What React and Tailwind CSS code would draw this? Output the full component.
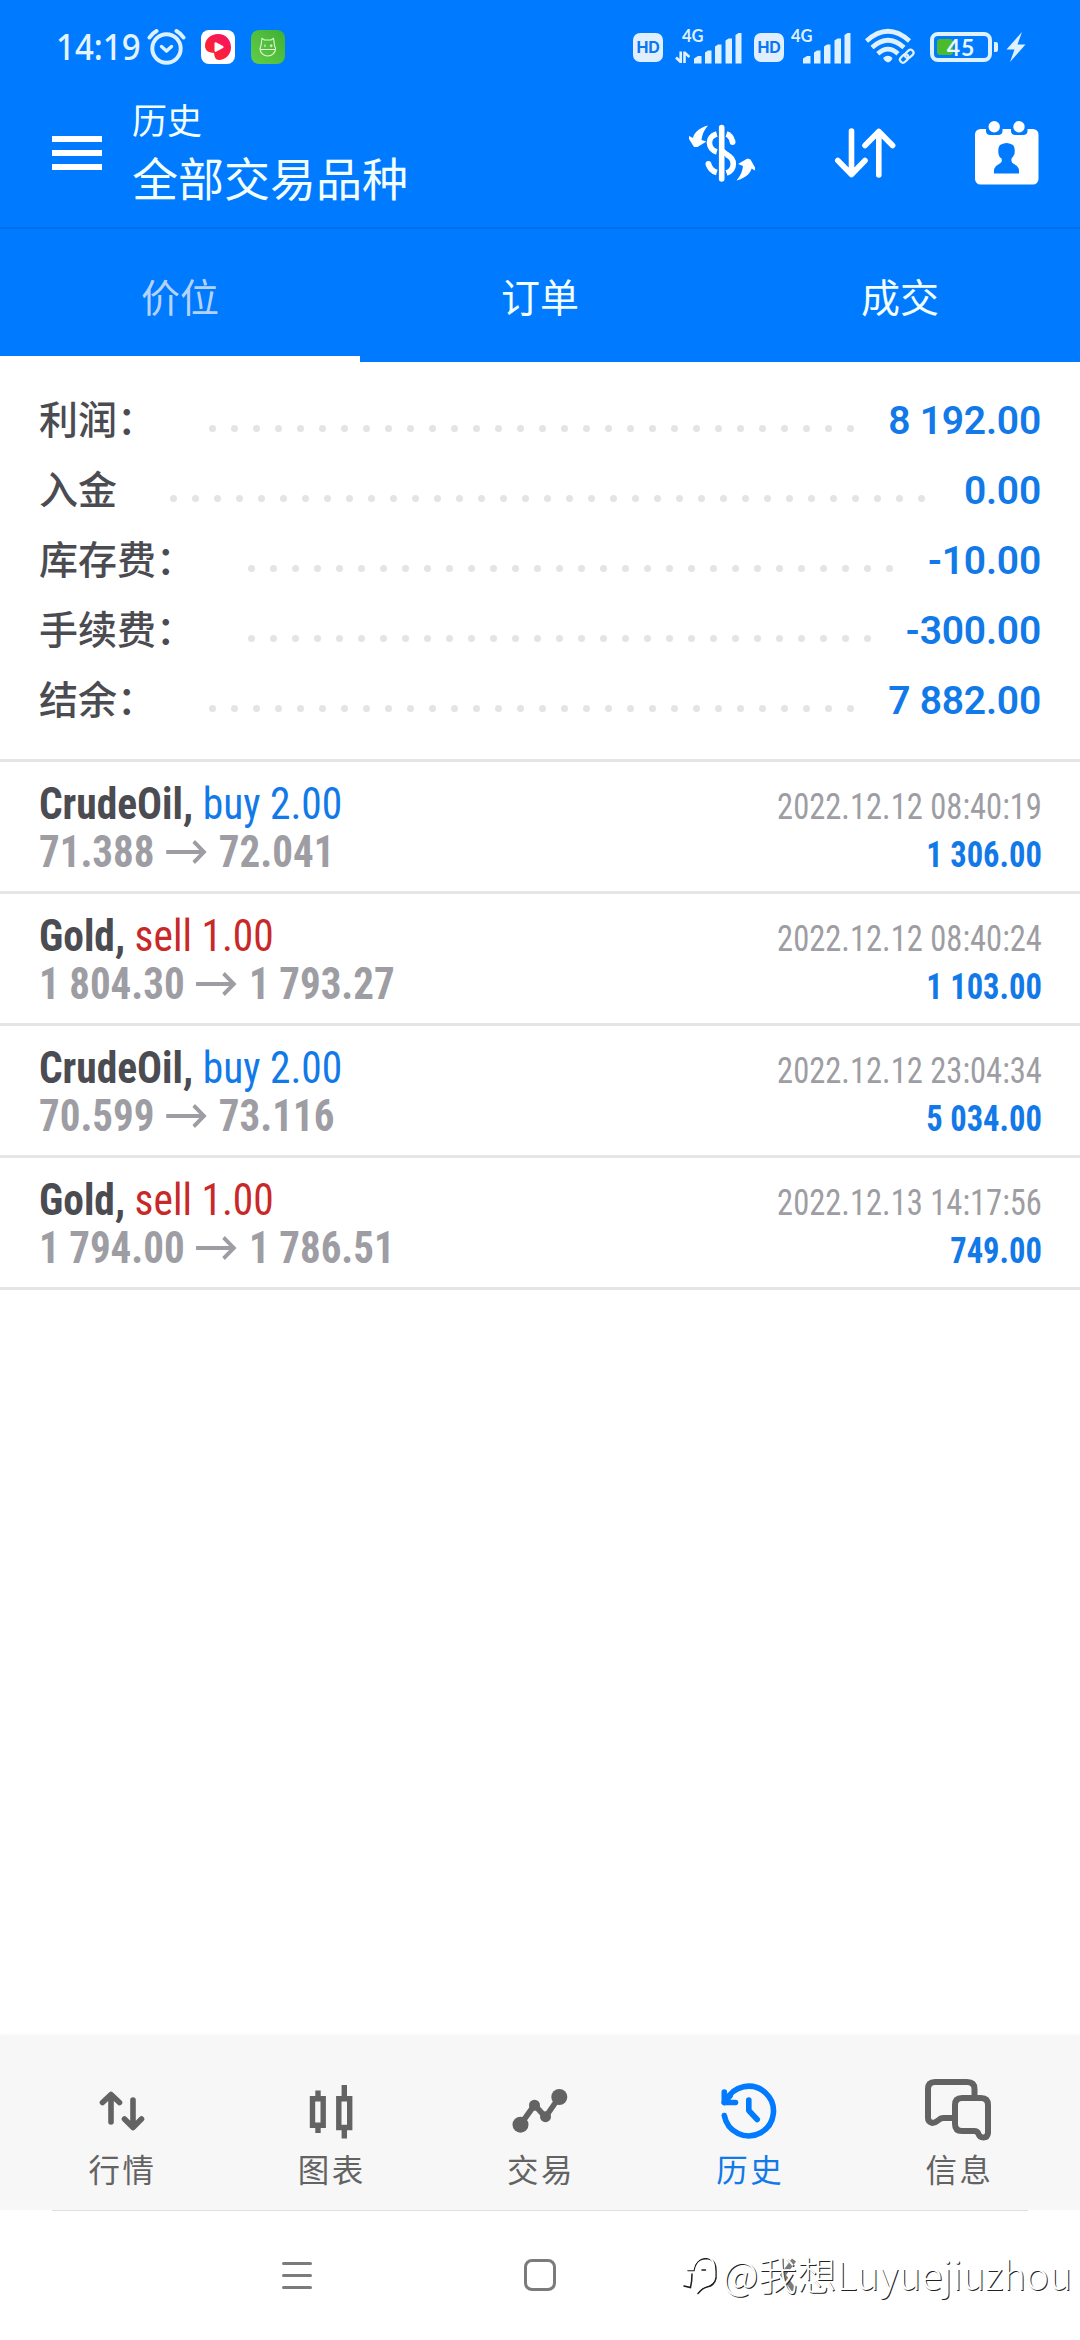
const summary = [
  { label: '利润：', value: '8 192.00', dots: 30 },
  { label: '入金', value: '0.00', dots: 35 },
  { label: '库存费：', value: '-10.00', dots: 30 },
  { label: '手续费：', value: '-300.00', dots: 29 },
  { label: '结余：', value: '7 882.00', dots: 30 },
];

const trades = [
  { symbol: 'CrudeOil', side: 'buy', volume: '2.00', open: '71.388', close: '72.041', time: '2022.12.12 08:40:19', profit: '1 306.00' },
  { symbol: 'Gold', side: 'sell', volume: '1.00', open: '1 804.30', close: '1 793.27', time: '2022.12.12 08:40:24', profit: '1 103.00' },
  { symbol: 'CrudeOil', side: 'buy', volume: '2.00', open: '70.599', close: '73.116', time: '2022.12.12 23:04:34', profit: '5 034.00' },
  { symbol: 'Gold', side: 'sell', volume: '1.00', open: '1 794.00', close: '1 786.51', time: '2022.12.13 14:17:56', profit: '749.00' },
];

const tabs = [
  { label: '价位', active: true },
  { label: '订单', active: false },
  { label: '成交', active: false },
];

function AlarmIcon() {
  return (
    <svg className="ml-[8px] h-[38px] w-[40px]" viewBox="146 28 40 38" fill="none" stroke="#dcf1ff" strokeLinecap="round">
      <circle cx="166.5" cy="48.5" r="14.2" strokeWidth="4" />
      <path d="M149.5 37.5Q152 33.500 156.500 31M183.500 37.500Q181 33.500 176.500 31" strokeWidth="4" />
      <path d="M161.500 46.500L166.500 51L171.500 46.500" strokeWidth="3.400" strokeLinejoin="round" />
    </svg>
  );
}

function VideoAppIcon() {
  return (
    <svg className="ml-[15px] h-[34px] w-[34px]" viewBox="0 0 34 34">
      <defs>
        <linearGradient id="redBlob" x1="0" y1="1" x2="1" y2="0">
          <stop offset="0" stopColor="#ff2a1c" />
          <stop offset="1" stopColor="#f5116b" />
        </linearGradient>
      </defs>
      <rect width="34" height="34" rx="8" fill="#fff" />
      <path d="M17 4C25 4 30 10 30 17.500C30 25 24 30 18 30C14.500 30 13.500 27 13 23C9 22.500 4 21.500 4 16C4 9 9.500 4 17 4Z" fill="url(#redBlob)" />
      <path d="M13.500 13.500Q13.500 11.800 15 12.300L22 16Q23.500 17 22 18L15 21.800Q13.500 22.300 13.500 20.500Z" fill="#fff" />
    </svg>
  );
}

function GreenAppIcon() {
  return (
    <svg className="ml-[16px] h-[34px] w-[34px]" viewBox="0 0 34 34">
      <defs>
        <linearGradient id="greenTile" x1="0" y1="1" x2="1" y2="0">
          <stop offset="0" stopColor="#62cd48" />
          <stop offset="1" stopColor="#3fb035" />
        </linearGradient>
      </defs>
      <rect width="34" height="34" rx="8" fill="url(#greenTile)" />
      <g fill="none" stroke="#e4f9cf" strokeWidth="1.100">
        <path d="M10.500 11.500L11 8.500L13.500 10H20L22.500 8.500L23 11.500Q23 15 24.500 18.500C24.500 23 21 26 16.800 26C12.500 26 9 23 9 18.500Q10.500 15 10.500 11.500ZM9 19.500H24.500" />
        <path d="M14 14.500V17M18.700 15.700H21.700M20.200 14.200V17.200" />
      </g>
    </svg>
  );
}

function HdBadge({ className }) {
  return (
    <span className={`flex h-[29px] w-[30px] items-center justify-center rounded-[7px] bg-[#dfefff] font-['Inter',sans-serif] text-[16px] leading-none font-bold tracking-[-0.3px] text-[#0a76f0] ${className}`}>
      HD
    </span>
  );
}

function CellSignal({ transfer, className }) {
  return (
    <span className={`flex h-[34px] items-start ${className}`}>
      <span className="flex h-full w-[27px] flex-col items-end">
        <span className="w-[20px] font-['Lato',sans-serif] text-[16.5px] leading-[13px] font-bold text-[#dff1ff]">4G</span>
        {transfer && (
          <svg className="mt-[8px] mr-[12px] h-[12px] w-[15px]" viewBox="0 0 15 12" fill="none" stroke="#dff1ff" strokeWidth="2.600">
            <path d="M5.700 0.500V12M5.700 11L1 6.500M9.500 12V0.500M9.500 1.500L14.500 6" />
          </svg>
        )}
      </span>
      <svg className="-ml-[9px] h-[34px] w-[49px]" viewBox="0 0 49 34" fill="#dff1ff">
        <path d="M1 33.500V28.500L5 26H8.500V33.500ZM12 33.500V22.500L15 20.500H18.500V33.500ZM22 33.500V16.500L25 14.500H28.500V33.500ZM32.500 33.500V10.500L35.500 8.500H39V33.500ZM42.500 33.500V5L45.500 3H48.500V33.500Z" />
      </svg>
    </span>
  );
}

function WifiIcon() {
  return (
    <svg className="ml-[13px] h-[38px] w-[52px]" viewBox="864 29 52 38" fill="none" stroke="#dff1ff">
      <path d="M866.500 42Q888 22.500 909.500 42" strokeWidth="4.600" />
      <path d="M872 48.500Q888 34 904 48.500" strokeWidth="4.600" />
      <path d="M877.800 54.800Q888 45.500 898 54.800" strokeWidth="4.600" />
      <path d="M883 59Q888 54.500 892.500 59Q891.500 62.500 888 63.500Q884.500 62.500 883 59Z" fill="#dff1ff" stroke="none" />
      <g strokeWidth="2.200" strokeLinecap="round">
        <rect x="899.500" y="56.500" width="9.500" height="6" rx="3" transform="rotate(-45 904.200 59.500)" />
        <rect x="904.500" y="52" width="9.500" height="6" rx="3" transform="rotate(-45 909.200 55)" />
      </g>
    </svg>
  );
}

function Battery() {
  return (
    <span className="ml-[14px] flex items-center">
      <span className="relative flex h-[30px] w-[62px] items-center justify-center rounded-[8px] border-[4px] border-[#dff1ff]">
        <span className="absolute top-[3px] left-[3px] h-[16px] w-[16px] rounded-[3px] bg-[#4cbb2b]" />
        <span className="relative font-['Lato',sans-serif] text-[23px] leading-none font-bold tracking-[1px] text-[#e9f7ff]">45</span>
      </span>
      <span className="ml-[2px] h-[10px] w-[4px] rounded-r-[2px] bg-[#dff1ff]" />
      <svg className="ml-[8px] h-[30px] w-[20px]" viewBox="0 0 20 30" fill="#dff1ff">
        <path d="M16 0L0.500 17.500H8.500L4 30L19.500 12.500H11.500Z" />
      </svg>
    </span>
  );
}

function StatusBar() {
  return (
    <div className="flex h-[94px] items-center pl-[56px]">
      <span className="w-[82px] origin-left scale-x-[0.93] font-['Noto_Sans',sans-serif] text-[35.500px] leading-none font-medium whitespace-nowrap text-[#e4f4ff]">14:19</span>
      <AlarmIcon />
      <VideoAppIcon />
      <GreenAppIcon />
      <HdBadge className="ml-[348px]" />
      <CellSignal transfer className="ml-[12px]" />
      <HdBadge className="ml-[12px]" />
      <CellSignal className="ml-0" />
      <WifiIcon />
      <Battery />
    </div>
  );
}

function DollarSwapIcon() {
  return (
    <svg className="h-[60px] w-[70px]" viewBox="687 123 70 60" fill="none">
      <path d="M721.700 127.500V179" stroke="#fff" strokeWidth="5.600" strokeLinecap="round" />
      <path d="M716.800 134C706 137 708 149.500 716.800 152M726.500 134Q731 135.500 732.500 141.500M726.500 154.500C736 159 735 170 726.500 173M716.800 172.500Q710 170.500 708.500 164" stroke="#fff" strokeWidth="5.600" />
      <circle cx="732.600" cy="142" r="2.900" fill="#fff" />
      <circle cx="708.400" cy="164" r="2.900" fill="#fff" />
      <path d="M722 150.500L727.500 155" stroke="#fff" strokeWidth="5" />
      <path d="M708 125.500C698 128 693.500 134 693 138L689 136V139L694 147H697.500L706.500 141.500L701.500 140C702 135 704 130 708 125.500Z" fill="#fff" />
      <path d="M736.500 180.500C746.500 178 751 172 751.500 168.500L755 170.500V167.500L750.500 159.500L747.500 158.500L738 164L743 166C742.500 171 740.500 176 736.500 180.500Z" fill="#fff" />
    </svg>
  );
}

function SortIcon() {
  return (
    <svg className="ml-[77px] h-[54px] w-[64px]" viewBox="834 126 64 54" fill="none" stroke="#fff" strokeWidth="5.600" strokeLinecap="round" strokeLinejoin="round">
      <path d="M851.500 131V174M837.800 160.500L851.500 174.500L865 160.500M878.800 175V131.500M865 145.500L878.800 131.500L892.600 145.500" />
    </svg>
  );
}

function CalendarUserIcon() {
  return (
    <svg className="ml-[75px] h-[66px] w-[68px]" viewBox="973 119 68 66">
      <rect x="975" y="128" width="63.500" height="55.500" rx="5.500" fill="#fff" />
      <path d="M986 126H1002.500V130Q1002.500 134 998 134H990.500Q986 134 986 130ZM1011 126H1027.500V130Q1027.500 134 1023 134H1015.500Q1011 134 1011 130Z" fill="#007aff" />
      <circle cx="994.200" cy="125.700" r="5.700" fill="#fff" />
      <circle cx="1019" cy="125.700" r="5.700" fill="#fff" />
      <path d="M1001 143.500Q1006.500 140.500 1012 143.500Q1015.500 145 1014.500 153Q1013 156 1011.500 157.500Q1011 161 1012.500 162L1017 165Q1019.500 167.500 1019 172.500H994Q993.500 167.500 996 165L1000.500 162Q1002.500 161 1001.500 157.500Q999 156 998.500 153Q997.500 145 1001 143.500Z" fill="#007aff" />
    </svg>
  );
}

function TitleBar() {
  return (
    <div className="flex h-[135px] items-start border-b-2 border-[#0070ea] pl-[52px]">
      <span className="mt-[42px] flex w-[50px] flex-col gap-[8px]">
        <span className="h-[6px] bg-white" />
        <span className="h-[6px] bg-white" />
        <span className="h-[6px] bg-white" />
      </span>
      <div className="ml-[30px] w-[555px] text-[#f2ffff]">
        <div className="mt-[4px] text-[35px] leading-[50px]">历史</div>
        <div className="mt-px text-[46px] leading-[62px]">全部交易品种</div>
      </div>
      <div className="mt-[25px] flex h-[68px] items-center">
        <DollarSwapIcon />
        <SortIcon />
        <CalendarUserIcon />
      </div>
    </div>
  );
}

function Tabs() {
  return (
    <div className="grid h-[133px] grid-cols-3">
      {tabs.map((t) => (
        <div
          key={t.label}
          className={
            t.active
              ? 'h-[133px] border-b-[6px] border-white pt-[5px] text-center text-[39px] leading-[122px] text-[#b5d3fa]'
              : 'h-[133px] pt-[5px] text-center text-[39px] leading-[128px] text-[#f2ffff]'
          }
        >
          <span className={t.active ? 'relative top-[4px]' : 'relative top-px'}>{t.label}</span>
        </div>
      ))}
    </div>
  );
}

function SummaryRow({ label, value, dots }) {
  return (
    <div className="flex h-[70px] items-center">
      <span className="pt-[3px] text-[39px] leading-[67px] font-medium whitespace-nowrap text-[#4b4b52]">{label}</span>
      <span className="mt-[17px] ml-[53px] flex gap-[15px]">
        {Array.from({ length: dots }, (_, i) => (
          <span key={i} className="h-[7px] w-[7px] rounded-full bg-[#e4e4e4]" />
        ))}
      </span>
      <span className="ml-auto pt-[3px] text-[39px] leading-[67px] font-semibold tracking-[-0.200px] whitespace-nowrap text-[#1279e8]">{value}</span>
    </div>
  );
}

function PriceArrow() {
  return (
    <svg className="mx-[12px] h-[26px] w-[45px]" viewBox="0 0 45 26" fill="none" stroke="#9d9da3" strokeWidth="4">
      <path d="M0.500 13H41M30 2.500L41 13L30 23.500" />
    </svg>
  );
}

function TradeRow({ symbol, side, volume, open, close, time, profit }) {
  return (
    <div className="flex h-[132px] justify-between border-b-[3px] border-[#e5e5e5] pt-[18px] pr-[38px] pl-[39px] font-['Roboto_Condensed','Roboto',sans-serif]">
      <div className="text-[44px] leading-[48px]">
        <div className="origin-left scale-x-[0.942] whitespace-pre">
          <span className="font-bold text-[#4b4b52]">{symbol}, </span>
          <span className={side === 'buy' ? 'text-[#1279e8]' : 'text-[#c92828]'}>
            {side} {volume}
          </span>
        </div>
        <div className="flex origin-left scale-x-[0.932] items-center font-bold text-[#9d9da3]">
          <span>{open}</span>
          <PriceArrow />
          <span>{close}</span>
        </div>
      </div>
      <div className="origin-right scale-x-[0.892] pt-[3px] text-right text-[36.500px] leading-[48px]">
        <div className="text-[#9d9da3]">{time}</div>
        <div className="font-bold text-[#1279e8]">{profit}</div>
      </div>
    </div>
  );
}

function QuotesIcon() {
  return (
    <svg className="h-[60px] w-[60px]" viewBox="92 2080 60 60" fill="none" stroke="#636363" strokeWidth="5.600" strokeLinecap="round" strokeLinejoin="round">
      <path d="M111 2122V2095M102.500 2102.500L111 2094.500L119.500 2102.500M133 2100V2127M124.500 2119L133 2127.500L141.500 2119" />
    </svg>
  );
}

function CandlesIcon() {
  return (
    <svg className="h-[60px] w-[60px]" viewBox="301 2080 60 60" fill="none" stroke="#636363" strokeWidth="5.400">
      <path d="M318 2090.500V2098M318 2126V2133M344.300 2085V2098M344.300 2128V2138.500" />
      <path d="M312.500 2098.700H323.200V2125.300H312.500ZM338.800 2098.700H349.700V2127.500H338.800Z" />
    </svg>
  );
}

function TradeIcon() {
  return (
    <svg className="h-[60px] w-[60px]" viewBox="510 2080 60 60" fill="#636363">
      <path d="M520.500 2124.500L534.500 2105L545.500 2117L559.300 2097" fill="none" stroke="#636363" strokeWidth="5.600" />
      <circle cx="520.500" cy="2124.700" r="8" />
      <circle cx="534.500" cy="2105.200" r="5.500" />
      <circle cx="545.500" cy="2116.700" r="5.500" />
      <circle cx="559.300" cy="2097" r="8" />
    </svg>
  );
}

function HistoryIcon() {
  return (
    <svg className="h-[60px] w-[60px]" viewBox="719 2080 60 60" fill="none" stroke="#007aff" strokeWidth="5.600" strokeLinecap="round" strokeLinejoin="round">
      <path d="M724.300 2115.500A24.800 24.800 0 1 0 726 2101M724.300 2092V2102.500H735.500M748.800 2100V2110.500L757.200 2119.500" />
      <path d="M724.300 2102.500L730 2096" />
    </svg>
  );
}

function MessagesIcon() {
  return (
    <svg className="h-[68px] w-[72px]" viewBox="922 2077 72 68" fill="none" stroke="#636363" strokeWidth="6" strokeLinejoin="round">
      <path d="M953 2119H943Q940.500 2119 938 2121.500Q935 2124 932.500 2124Q928 2123 928 2119V2090Q928 2083 935 2083H967Q974.500 2083 974.500 2090V2098" />
      <path d="M962 2099H981Q988 2099 988 2106V2134Q987.500 2138.500 983.500 2138.500Q979.500 2138.500 978.500 2135Q977.500 2132 974 2132H962Q955 2132 955 2125V2106Q955 2099 962 2099Z" />
    </svg>
  );
}

const navItems = [
  { label: '行情', Icon: QuotesIcon },
  { label: '图表', Icon: CandlesIcon },
  { label: '交易', Icon: TradeIcon },
  { label: '历史', Icon: HistoryIcon, active: true },
  { label: '信息', Icon: MessagesIcon },
];

function BottomNav() {
  return (
    <div className="mt-auto h-[174px] bg-[#f7f7f7] px-[17px] shadow-[0_-1px_3px_#f4f4f4]">
      <div className="grid h-full grid-cols-5">
        {navItems.map(({ label, Icon, active }) => (
          <div key={label} className="flex flex-col items-center pt-[40px]">
            <span className="flex h-[68px] items-center justify-center">
              <Icon />
            </span>
            <span
              className={
                active
                  ? 'mt-[4px] pl-[2px] text-[31.500px] leading-[48px] tracking-[2.500px] text-[#1279e8]'
                  : 'mt-[4px] pl-[2px] text-[31.500px] leading-[48px] tracking-[2.500px] text-[#636363]'
              }
            >
              {label}
            </span>
          </div>
        ))}
      </div>
    </div>
  );
}

function SystemNav() {
  return (
    <div className="relative h-[130px] bg-white">
      <div className="mx-[52px] h-px bg-[#dfdfdf]" />
      <div className="flex h-[128px] items-center pl-[282px]">
        <span className="flex w-[30px] flex-col gap-[9px]">
          <span className="h-[3px] rounded-full bg-[#7b7b7b]" />
          <span className="h-[3px] rounded-full bg-[#7b7b7b]" />
          <span className="h-[3px] rounded-full bg-[#7b7b7b]" />
        </span>
        <span className="ml-[212px] h-[32px] w-[32px] rounded-[8px] border-[3px] border-[#7b7b7b]" />
        <svg className="ml-[222px] h-[36px] w-[24px]" viewBox="0 0 24 36" fill="none" stroke="#7b7b7b" strokeWidth="5">
          <path d="M16 3L5 18L16 33" />
        </svg>
      </div>
      <Watermark />
    </div>
  );
}

function Watermark() {
  return (
    <div className="absolute top-[38px] right-[8px] flex items-center">
      <svg className="mr-[4px] h-[48px] w-[38px]" viewBox="677 2257 38 48" fill="none" strokeLinecap="round">
        <path d="M684 2278.500H690C691 2271 696 2266.500 703 2266.500C709 2267 712 2272 712 2279V2286C711 2291 708 2294 703 2295C699 2296 696 2299 694 2301.500M688 2282Q688 2290 686.500 2295.500L680 2294M698 2278H701.500" stroke="#1c1c1c" strokeWidth="1.500" />
        <path d="M683 2277.500H689C690 2270 695 2265 702 2265C708 2265.500 710.500 2271 710.500 2278V2285C709.500 2290 707 2292.500 702 2293.500C698 2294.500 695 2297.500 693 2300" stroke="#fff" strokeWidth="1.500" />
      </svg>
      <span className="font-['Noto_Sans_CJK_SC',sans-serif] text-[39px] leading-[50px] font-light whitespace-nowrap text-white [text-shadow:1px_1px_0_#222]">
        @我想Luyuejiuzhou
      </span>
    </div>
  );
}

export default function App() {
  return (
    <div className="flex h-[2340px] w-[1080px] flex-col overflow-hidden bg-white font-['Roboto','Noto_Sans_CJK_SC',sans-serif]">
      <header className="bg-[#007aff]">
        <StatusBar />
        <TitleBar />
        <Tabs />
      </header>
      <section className="h-[400px] border-b-[3px] border-[#e5e5e5] pt-[23px] pr-[39px] pl-[39px]">
        {summary.map((row) => (
          <SummaryRow key={row.label} {...row} />
        ))}
      </section>
      <main>
        {trades.map((t) => (
          <TradeRow key={t.time} {...t} />
        ))}
      </main>
      <BottomNav />
      <SystemNav />
    </div>
  );
}
